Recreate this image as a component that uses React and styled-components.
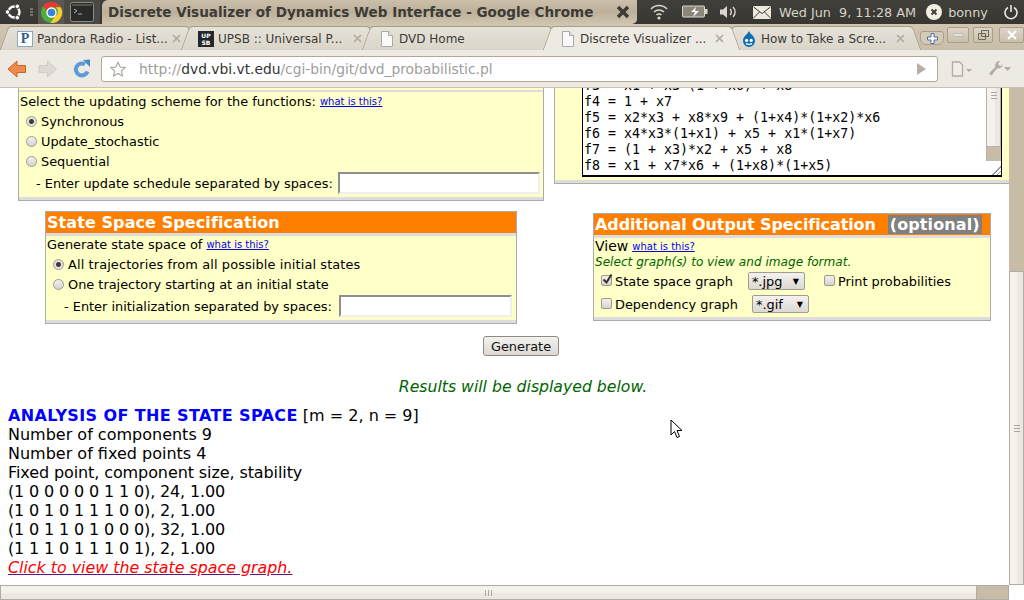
import React from "react"
import styled, { createGlobalStyle } from "styled-components"

const Global = createGlobalStyle`
  html, body { margin: 0; padding: 0; background: #fff; }
  body { width: 1024px; height: 600px; overflow: hidden; font-family: "DejaVu Sans", sans-serif; }
`

const Screen = styled.div`
  position: relative;
  width: 1024px;
  height: 600px;
  display: flex;
  flex-direction: column;
  overflow: hidden;
`

/* ---- ubuntu panel ---- */
const Panel = styled.div`
  height: 24px;
  flex: none;
  display: flex;
  align-items: center;
  background: linear-gradient(#403f3a, #373632);
  color: #dcd7cb;
`
const Launcher = styled.div`
  width: 102px;
  display: flex;
  align-items: center;
  height: 24px;
  padding-left: 4px;
  box-sizing: border-box;
`
const LauncherItem = styled.div`
  width: ${p => p.w}px;
  height: 24px;
  flex: none;
  display: flex;
  align-items: center;
  justify-content: center;
  background: ${p => p.bg || "transparent"};
`
const Handle = styled.div`
  width: 3px;
  height: 9px;
  background: repeating-linear-gradient(180deg, #77756e 0 2px, transparent 2px 3px);
`
const TitleTab = styled.div`
  width: 535px;
  height: 24px;
  box-sizing: border-box;
  padding: 0 7px 0 6px;
  display: flex;
  align-items: center;
  justify-content: space-between;
  background: linear-gradient(#cbbfa9, #bcb09a 50%, #cfc4ae);
  border-radius: 6px 0 5px 0;
  color: #3c3b37;
  font-weight: bold;
  font-size: 13.55px;
  white-space: nowrap;
`
const Tray = styled.div`
  flex: 1;
  display: flex;
  align-items: center;
  height: 24px;
  padding-left: 4px;
  font-size: 12.8px;
  white-space: nowrap;
`
const TrayText = styled.span`
  margin-left: ${p => p.ml}px;
  color: #d8d3c6;
`
const TrayIcon = styled.svg`
  margin-left: ${p => p.ml}px;
  flex: none;
`

/* ---- tab strip ---- */
const TabStrip = styled.div`
  height: 26px;
  flex: none;
  display: flex;
  align-items: flex-end;
  padding-left: 8px;
  background: linear-gradient(#cfc5b0, #c9bea9);
  position: relative;
`
const Tab = styled.div`
  position: relative;
  width: 181px;
  height: 24px;
  flex: none;
  box-sizing: border-box;
  padding: 0 5px 0 9px;
  display: flex;
  align-items: center;
  gap: 4px;
  font-size: 12px;
  color: #3c3b37;
  white-space: nowrap;
  background: ${p => (p.active ? "#ede9e3" : "linear-gradient(#e6e2d9, #dbd5c9)")};
  border-top: 1px solid #a89e8a;
  border-radius: 4px 4px 0 0;
  z-index: ${p => (p.active ? 2 : 1)};
  &::before, &::after {
    content: "";
    position: absolute;
    top: -1px;
    bottom: 0;
    width: 10px;
    background: inherit;
  }
  &::before {
    left: -4px;
    transform: skewX(-20deg);
    border-left: 1px solid #a89e8a;
    border-top: 1px solid #a89e8a;
    border-radius: 4px 0 0 0;
  }
  &::after {
    right: -4px;
    transform: skewX(20deg);
    border-right: 1px solid #a89e8a;
    border-top: 1px solid #a89e8a;
    border-radius: 0 4px 0 0;
  }
`
const TabLabel = styled.span`
  flex: 1;
  position: relative;
  z-index: 1;
`
const TabClose = styled.svg`
  position: relative;
  z-index: 1;
  margin-right: 3px;
  flex: none;
`
const Favicon = styled.span`
  position: relative;
  z-index: 1;
  width: 16px;
  height: 16px;
  flex: none;
  display: flex;
`
const PandoraIcon = styled.span`
  width: 16px;
  height: 16px;
  box-sizing: border-box;
  border: 1px solid #8da6c8;
  background: #fff;
  color: #2f5b96;
  font: bold 14px/14px "Liberation Serif", serif;
  text-align: center;
`
const UpsbIcon = styled.span`
  width: 16px;
  height: 16px;
  background: #25282b;
  color: #fff;
  font: bold 6px/7px "DejaVu Sans", sans-serif;
  text-align: center;
  padding-top: 1px;
  box-sizing: border-box;
`
const NewTab = styled.div`
  width: 24px;
  height: 14px;
  margin: 0 0 5px 7px;
  box-sizing: border-box;
  background: #d3cab7;
  border: 1px solid #a89e8a;
  border-radius: 3px 3px 6px 6px;
  display: flex;
  align-items: center;
  justify-content: center;
`
const WinButtons = styled.div`
  display: flex;
  margin: 0 0 7px 3px;
`
const WinButton = styled.div`
  width: ${p => p.w}px;
  height: 16px;
  margin-right: ${p => p.mr || 0}px;
  flex: none;
  box-sizing: border-box;
  border: 1px solid #a89e8a;
  background: linear-gradient(#ddd6c8, #c9bfab);
  border-radius: 2px;
  display: flex;
  align-items: center;
  justify-content: center;
`

/* ---- toolbar ---- */
const Toolbar = styled.div`
  height: 38px;
  flex: none;
  display: flex;
  align-items: center;
  background: #ede9e3;
  border-bottom: 1px solid #c9c3b7;
  box-sizing: border-box;
`
const NavSlot = styled.div`
  width: ${p => p.w}px;
  height: 26px;
  flex: none;
  display: flex;
  align-items: center;
  justify-content: center;
`
const Omnibox = styled.div`
  width: 837px;
  height: 26px;
  box-sizing: border-box;
  flex: none;
  display: flex;
  align-items: center;
  background: #fff;
  border: 1px solid #b3a88f;
  border-radius: 3px;
  padding: 0 11px 0 8px;
  font-size: 13.8px;
  color: #9d9d9d;
  white-space: nowrap;
`
const Url = styled.span`
  flex: 1;
  margin-left: 13px;
`
const Host = styled.span`
  color: #333;
`

/* ---- browser viewport ---- */
const Viewport = styled.div`
  flex: 1;
  min-height: 0;
  display: grid;
  grid-template-columns: 1fr 15px;
  grid-template-rows: 1fr 15px;
  background: #fff;
`
const Page = styled.div`
  overflow: hidden;
  min-width: 0;
  color: #000;
`
const TopRow = styled.div`
  display: flex;
  align-items: flex-start;
  height: 112px;
`
const LeftForm = styled.div`
  width: 526px;
  height: 113px;
  margin-left: 18px;
  box-sizing: border-box;
  background: linear-gradient(#ffffc8 2px, #ddd 2px 4px, #ffffc8 4px);
  border: solid #ababab;
  border-width: 0 1px 1px;
  box-shadow: inset 0 -3px 0 #ddd;
  padding: 3px 0 0 1px;
  font-size: 12.9px;
`
const RightForm = styled.div`
  width: 455px;
  height: 96px;
  margin-left: 10px;
  box-sizing: border-box;
  background: #ffffc8;
  border-left: 1px solid #ababab;
  border-bottom: 1px solid #ababab;
  box-shadow: inset 0 -3px 0 #ddd;
  padding-left: 27px;
`
const TextArea = styled.div`
  width: 420px;
  height: 89px;
  box-sizing: border-box;
  display: flex;
  background: #fff;
  border: solid #000;
  border-width: 0 1px 2px 1px;
  overflow: hidden;
`
const Code = styled.pre`
  flex: 1;
  margin: -10px 0 0 1px;
  font: 13.3px/16px "DejaVu Sans Mono", monospace;
  color: #000;
`
const AreaBar = styled.div`
  width: 15px;
  display: flex;
  flex-direction: column;
  flex: none;
`
const AreaThumb = styled.div`
  height: 59px;
  flex: none;
  box-sizing: border-box;
  background: linear-gradient(90deg, #f5f1eb 60%, #ece8e1 60%);
  border: 1px solid #b5b0a8;
  border-top: 0;
  display: flex;
  justify-content: center;
  padding-top: 4px;
`
const AreaTrack = styled.div`
  height: 14px;
  flex: none;
  background: #c9bca6;
  box-sizing: border-box;
  border-left: 1px solid #b5b0a8;
`
const AreaGrip = styled.div`
  flex: 1;
  background: repeating-linear-gradient(135deg, #fff 0 2px, #999 2px 3px);
  clip-path: polygon(100% 20%, 100% 100%, 20% 100%);
`
const Grip = styled.div`
  width: ${p => (p.h ? "7px" : "6px")};
  height: ${p => (p.h ? "6px" : "7px")};
  background: ${p => p.h
    ? "repeating-linear-gradient(90deg, #aaa7a0 0 1px, transparent 1px 3px)"
    : "repeating-linear-gradient(180deg, #aaa7a0 0 1px, transparent 1px 3px)"};
`
const MidRow = styled.div`
  display: flex;
  align-items: flex-start;
  margin-top: 11px;
`
const Spec = styled.div`
  width: ${p => p.w}px;
  height: ${p => p.h}px;
  margin-left: ${p => p.ml}px;
  margin-top: ${p => p.mt || 0}px;
  flex: none;
  box-sizing: border-box;
  background: #ffffc8;
  border: 1px solid #ababab;
  box-shadow: inset 0 -3px 0 #ddd;
  font-size: 12.9px;
`
const SpecHead = styled.div`
  height: 24px;
  margin-bottom: -2px;
  box-sizing: border-box;
  background: #ff8000;
  border-bottom: 3px solid #ddd;
  padding-left: 1px;
  color: #fff;
  font-weight: bold;
  font-size: 16px;
  line-height: 21px;
  letter-spacing: ${p => p.ls}px;
  white-space: nowrap;
`
const Optional = styled.span`
  background: #808080;
  margin-left: 12px;
  padding: 0 2px;
  letter-spacing: .1px;
`
const Line = styled.div`
  display: flex;
  align-items: center;
  height: 20px;
  margin-top: ${p => p.mt || 0}px;
  padding-left: ${p => p.pl || 0}px;
  letter-spacing: ${p => p.ls || 0}px;
  white-space: nowrap;
`
const Help = styled.a`
  color: #0000ee;
  text-decoration: underline;
  font-size: 10px;
  letter-spacing: 0;
  margin-left: 4px;
`
const ViewLabel = styled.span`
  font-size: 14px;
`
const Radio = styled.span`
  width: 11px;
  height: 11px;
  flex: none;
  margin-right: 4px;
  border-radius: 50%;
  box-sizing: border-box;
  border: 1px solid #9c9a95;
  background: ${p => p.on
    ? "radial-gradient(circle, #3c3b37 0 2px, #e6e3de 3px)"
    : "linear-gradient(#f3f1ee, #d6d3ce)"};
`
const Check = styled.span`
  width: 11px;
  height: 11px;
  flex: none;
  margin-left: ${p => p.ml || 0}px;
  margin-right: 3px;
  margin-top: -2px;
  border-radius: 2px;
  box-sizing: border-box;
  border: 1px solid #9c9a95;
  background: linear-gradient(#f3f1ee, #d6d3ce);
  display: flex;
  overflow: visible;
`
const CheckMark = styled.svg`
  flex: none;
  margin: -2px 0 0 0;
`
const Field = styled.span`
  width: ${p => p.w}px;
  height: 22px;
  flex: none;
  box-sizing: border-box;
  margin-left: ${p => p.ml}px;
  background: #fff;
  border: 2px solid;
  border-color: #8f8f8f #efefef #efefef #8f8f8f;
`
const Hint = styled.div`
  color: #006400;
  font-style: italic;
  font-size: 12.1px;
  line-height: 16px;
  margin: -2px 0 1px;
  padding-left: 1px;
  white-space: nowrap;
`
const Select = styled.span`
  width: 57px;
  height: 18px;
  flex: none;
  box-sizing: border-box;
  margin-left: ${p => p.ml}px;
  padding: 0 5px 0 3px;
  display: flex;
  align-items: center;
  justify-content: space-between;
  background: linear-gradient(#f4f2ef, #dcd9d4);
  border: 1px solid #a19c90;
  border-radius: 2px;
`
const Arrow = styled.span`
  font-size: 8px;
`
const ButtonRow = styled.div`
  display: flex;
  justify-content: center;
  margin: 12px 0 0 33px;
`
const Button = styled.button`
  width: 76px;
  height: 20px;
  padding: 0;
  font: 12.9px "DejaVu Sans", sans-serif;
  color: #111;
  background: linear-gradient(#f4f2ef, #dcd9d4);
  border: 1px solid #8f8b84;
  border-radius: 3px;
`
const Notice = styled.div`
  color: #006400;
  font-style: italic;
  font-size: 15.7px;
  line-height: 18px;
  text-align: center;
  margin: 22px 0 0 37px;
`
const Results = styled.div`
  margin: 10px 0 0 8px;
  font-size: 16px;
  line-height: 19px;
`
const ResultRow = styled.div`
  height: 19px;
  white-space: nowrap;
  letter-spacing: ${p => p.ls || 0}px;
`
const ResultsTitle = styled.b`
  color: #0000ff;
  letter-spacing: .38px;
`
const GraphLink = styled.a`
  color: #ff0000;
  font-style: italic;
  font-size: 15.85px;
  text-decoration: underline;
  text-decoration-color: #551a8b;
`

/* ---- scrollbars ---- */
const VBar = styled.div`
  display: flex;
  flex-direction: column;
  background: #c9bca6;
  padding-top: 183px;
  box-sizing: border-box;
`
const VThumb = styled.div`
  flex: 1;
  background: linear-gradient(90deg, #f5f1eb 55%, #ece8e1 55%);
  border: 1px solid #b0aca5;
  display: flex;
  align-items: center;
  justify-content: center;
`
const HBar = styled.div`
  display: flex;
  background: #c9bca6;
  border: 1px solid #b0aca5;
  border-left: 0;
  box-sizing: border-box;
`
const HThumb = styled.div`
  width: 977px;
  flex: none;
  background: linear-gradient(#f5f1eb 55%, #ece8e1 55%);
  border-right: 1px solid #b0aca5;
  border-left: 1px solid #b0aca5;
  box-sizing: border-box;
  display: flex;
  align-items: center;
  justify-content: center;
`
const Pointer = styled.svg`
  position: absolute;
  left: 670px;
  top: 419px;
`

const Ubuntu = () => (
  <svg width="20" height="20" viewBox="0 0 20 20">
    <circle cx="10" cy="10" r="5.5" fill="none" stroke="#fff" strokeWidth="2.4" />
    <circle cx="3.5" cy="10" r="2.3" fill="#fff" stroke="#3c3b37" />
    <circle cx="13.3" cy="4.3" r="2.3" fill="#fff" stroke="#3c3b37" />
    <circle cx="13.3" cy="15.7" r="2.3" fill="#fff" stroke="#3c3b37" />
  </svg>
)
const ChromeLogo = () => (
  <svg width="23" height="23" viewBox="0 0 24 24">
    <circle cx="12" cy="12" r="11" fill="#4caf3c" />
    <path d="M12 1a11 11 0 0 1 9.6 5.5H12a5.5 5.5 0 0 0-5.2 3.7L3 5.2A11 11 0 0 1 12 1z" fill="#e53a2f" />
    <path d="M21.6 6.5A11 11 0 0 1 11 23l4.8-7.2a5.5 5.5 0 0 0 .8-9.3z" fill="#f8cf2e" />
    <circle cx="12" cy="12" r="5.4" fill="#fff" />
    <circle cx="12" cy="12" r="4" fill="#3f7fd6" />
  </svg>
)
const Terminal = () => (
  <svg width="24" height="20" viewBox="0 0 24 20">
    <rect x=".5" y=".5" width="23" height="19" rx="2" fill="#2a2a28" stroke="#8d8b85" />
    <rect x="2" y="2" width="20" height="2" fill="#55534e" />
    <path d="M4 7l3 2-3 2M8 12h4" stroke="#b5b3ad" fill="none" />
  </svg>
)
const Doc = () => (
  <svg width="16" height="16" viewBox="0 0 16 16">
    <path d="M2.5.5h7l4 4v11h-11z" fill="#fafafa" stroke="#aaa" />
    <path d="M9.5.5v4h4" fill="#e6e6e6" stroke="#aaa" />
  </svg>
)
const Drupal = () => (
  <svg width="16" height="16" viewBox="0 0 16 16">
    <path d="M8 0c1 3 6 5 6 10a6 6 0 0 1-12 0c0-5 5-7 6-10z" fill="#0f6fb5" />
    <circle cx="5.6" cy="9.4" r="1.6" fill="#fff" />
    <circle cx="10.2" cy="9.4" r="1.6" fill="#fff" />
    <path d="M5 12.6c2 1 4 1 6 0" stroke="#fff" strokeWidth="1.2" fill="none" />
  </svg>
)
const Back = ({ off }) => (
  <svg width="20" height="18" viewBox="0 0 20 18">
    <path
      d="M10 1L1 9l9 8v-4.5h8.5v-7H10z"
      fill={off ? "#dedad2" : "#f08a4b"}
      stroke={off ? "#cfcbc2" : "#c9622a"}
      transform={off ? "matrix(-1 0 0 1 19.5 0)" : undefined}
    />
  </svg>
)
const Reload = () => (
  <svg width="20" height="20" viewBox="0 0 20 20">
    <path d="M15.5 12.5A6 6 0 1 1 13 5.3" fill="none" stroke="#5b9bd8" strokeWidth="4" />
    <path d="M11 1l7-.5V8z" fill="#4a8bcc" />
  </svg>
)
const Star = () => (
  <svg width="16" height="16" viewBox="0 0 18 17">
    <path d="M9 1l2.4 5.3 5.6.6-4.2 3.8 1.2 5.6L9 13.5l-5 2.8 1.2-5.6L1 6.9l5.6-.6z" fill="none" stroke="#aaa69e" strokeWidth="1.3" />
  </svg>
)
const Wrench = () => (
  <svg width="16" height="17" viewBox="0 0 16 17">
    <path d="M15 4a4.5 4.5 0 0 1-5.8 4.3L3.600 15.600 1 13.400l6.400-6.600A4.500 4.500 0 0 1 12.500 1L10 3.500l1 2 2 .5z" fill="#b5ad9d" />
  </svg>
)
const CloseX = () => (
  <TabClose width="9" height="9" viewBox="0 0 9 9">
    <path d="M1 1l7 7M8 1L1 8" stroke="#b0aa9f" strokeWidth="1.7" />
  </TabClose>
)

const TABS = [
  { label: "Pandora Radio - List...", icon: <PandoraIcon>P</PandoraIcon>, close: true },
  { label: "UPSB :: Universal P...", icon: <UpsbIcon>UP<br />SB</UpsbIcon>, close: true },
  { label: "DVD Home", icon: <Doc /> },
  { label: "Discrete Visualizer ...", icon: <Doc />, close: true, active: true },
  { label: "How to Take a Scre...", icon: <Drupal />, close: true },
]

const CODE = `f3 = x1 + x3*(1 + x6) + x8
f4 = 1 + x7
f5 = x2*x3 + x8*x9 + (1+x4)*(1+x2)*x6
f6 = x4*x3*(1+x1) + x5 + x1*(1+x7)
f7 = (1 + x3)*x2 + x5 + x8
f8 = x1 + x7*x6 + (1+x8)*(1+x5)
f9`

const RESULT_ROWS = [
  { text: "Number of components 9" },
  { text: "Number of fixed points 4" },
  { text: "Fixed point, component size, stability", ls: -.1 },
  { text: "(1 0 0 0 0 0 1 1 0), 24, 1.00", ls: -.14 },
  { text: "(1 0 1 0 1 1 1 0 0), 2, 1.00", ls: -.14 },
  { text: "(1 0 1 1 0 1 0 0 0), 32, 1.00", ls: -.14 },
  { text: "(1 1 1 0 1 1 1 0 1), 2, 1.00", ls: -.14 },
]

export default function App() {
  return (
    <Screen>
      <Global />
      <Panel>
        <Launcher>
          <LauncherItem w={20}><Ubuntu /></LauncherItem>
          <LauncherItem w={14}><Handle /></LauncherItem>
          <LauncherItem w={26} bg="#5a5852"><ChromeLogo /></LauncherItem>
          <LauncherItem w={36} bg="#4a4944"><Terminal /></LauncherItem>
        </Launcher>
        <TitleTab>
          Discrete Visualizer of Dynamics Web Interface - Google Chrome
          <svg width="14" height="14" viewBox="0 0 14 14">
            <path d="M2 2l10 10M12 2L2 12" stroke="#3c3b37" strokeWidth="3.4" />
          </svg>
        </TitleTab>
        <Tray>
          <TrayIcon ml={9} width="18" height="16" viewBox="0 0 18 16">
            <path d="M1 5a11 11 0 0 1 16 0M4 8a7 7 0 0 1 10 0M6.500 11a3.500 3.500 0 0 1 5 0" fill="none" stroke="#dcd7cb" strokeWidth="1.5" />
            <circle cx="9" cy="14" r="1.600" fill="#dcd7cb" />
          </TrayIcon>
          <TrayIcon ml={14} width="26" height="14" viewBox="0 0 26 14">
            <rect x=".5" y="1" width="22" height="11" rx="1" fill="#8a8778" stroke="#dcd7cb" />
            <rect x="23" y="4" width="2.500" height="5" fill="#dcd7cb" />
            <path d="M14 2l-5 5h4l-2 5 6-6h-4z" fill="#fff" />
          </TrayIcon>
          <TrayIcon ml={11} width="18" height="14" viewBox="0 0 18 14">
            <path d="M1 4.500h3l4-3.500v12l-4-3.500H1z" fill="#dcd7cb" />
            <path d="M11 4a4 4 0 0 1 0 6M14 2a7 7 0 0 1 0 10" fill="none" stroke="#dcd7cb" strokeWidth="1.400" />
          </TrayIcon>
          <TrayIcon ml={16} width="18" height="13" viewBox="0 0 18 13">
            <rect width="18" height="13" rx="1" fill="#eee9dd" />
            <path d="M.5 1L9 7.500 17.500 1M.5 12l6-6M17.500 12l-6-6" fill="none" stroke="#3c3b37" />
          </TrayIcon>
          <TrayText ml={8}>Wed Jun&nbsp; 9, 11:28 AM</TrayText>
          <TrayIcon ml={10} width="16" height="16" viewBox="0 0 16 16">
            <circle cx="8" cy="8" r="8" fill="#f3eee2" />
            <path d="M5.500 5.500l5 5M10.500 5.500l-5 5" stroke="#3c3b37" strokeWidth="1.800" />
          </TrayIcon>
          <TrayText ml={6}>bonny</TrayText>
          <TrayIcon ml={15} width="16" height="16" viewBox="0 0 16 16">
            <path d="M5 3.500a6 6 0 1 0 6 0M8 1v7" fill="none" stroke="#eee9dd" strokeWidth="1.600" />
          </TrayIcon>
        </Tray>
      </Panel>

      <TabStrip>
        {TABS.map(t => (
          <Tab key={t.label} active={t.active}>
            <Favicon>{t.icon}</Favicon>
            <TabLabel>{t.label}</TabLabel>
            {t.close && <CloseX />}
          </Tab>
        ))}
        <NewTab>
          <svg width="11" height="11" viewBox="0 0 11 11">
            <path d="M4 .5h3v3.500h3.500v3H7v3.500H4V7H.5V4H4z" fill="#fff" stroke="#4a6ea8" />
          </svg>
        </NewTab>
        <WinButtons>
          <WinButton w={22} mr={4}>
            <svg width="10" height="8" viewBox="0 0 10 8"><rect y="3" width="10" height="2" fill="#fff" stroke="#8f8778" strokeWidth=".5" /></svg>
          </WinButton>
          <WinButton w={20} mr={6}>
            <svg width="11" height="10" viewBox="0 0 11 10"><path d="M3.500.5h7v6h-7zM.5 3.500h7v6h-7z" fill="none" stroke="#6d675b" /></svg>
          </WinButton>
          <WinButton w={25}>
            <svg width="10" height="10" viewBox="0 0 10 10"><path d="M1 1l8 8M9 1L1 9" stroke="#fff" strokeWidth="2" /></svg>
          </WinButton>
        </WinButtons>
      </TabStrip>

      <Toolbar>
        <NavSlot w={33}><Back /></NavSlot>
        <NavSlot w={30}><Back off={1} /></NavSlot>
        <NavSlot w={38}><Reload /></NavSlot>
        <Omnibox>
          <Star />
          <Url>http://<Host>dvd.vbi.vt.edu</Host>/cgi-bin/git/dvd_probabilistic.pl</Url>
          <svg width="9" height="12" viewBox="0 0 9 12"><path d="M0 0l9 6-9 6z" fill="#b5b0a5" /></svg>
        </Omnibox>
        <NavSlot w={48}>
          <svg width="22" height="16" viewBox="0 0 22 16">
            <path d="M1.500 1h7l3 3v11h-10z" fill="#f2eee7" stroke="#b5ad9d" strokeWidth="1.300" />
            <path d="M15 8h6l-3 3z" fill="#b5ad9d" />
          </svg>
        </NavSlot>
        <NavSlot w={26}>
          <Wrench />
          <svg width="7" height="4" viewBox="0 0 7 4"><path d="M0 0h7L3.500 4z" fill="#b5ad9d" /></svg>
        </NavSlot>
      </Toolbar>

      <Viewport>
        <Page>
          <TopRow>
            <LeftForm>
              <Line>Select the updating scheme for the functions:<Help>what is this?</Help></Line>
              <Line pl={6}><Radio on={1} />Synchronous</Line>
              <Line pl={6}><Radio />Update_stochastic</Line>
              <Line pl={6}><Radio />Sequential</Line>
              <Line pl={16} mt={2}>- Enter update schedule separated by spaces:<Field w={202} ml={5} /></Line>
            </LeftForm>
            <RightForm>
              <TextArea>
                <Code>{CODE}</Code>
                <AreaBar>
                  <AreaThumb><Grip /></AreaThumb>
                  <AreaTrack />
                  <AreaGrip />
                </AreaBar>
              </TextArea>
            </RightForm>
          </TopRow>

          <MidRow>
            <Spec w={472} h={113} ml={45}>
              <SpecHead ls={.08}>State Space Specification</SpecHead>
              <Line pl={1}>Generate state space of<Help>what is this?</Help></Line>
              <Line pl={7} ls={.12}><Radio on={1} />All trajectories from all possible initial states</Line>
              <Line pl={7}><Radio />One trajectory starting at an initial state</Line>
              <Line pl={18} mt={2}>- Enter initialization separated by spaces:<Field w={173} ml={7} /></Line>
            </Spec>
            <Spec w={398} h={108} ml={76} mt={2}>
              <SpecHead ls={-.1}>Additional Output Specification<Optional>(optional)</Optional></SpecHead>
              <Line pl={1}><ViewLabel>View</ViewLabel><Help>what is this?</Help></Line>
              <Hint>Select graph(s) to view and image format.</Hint>
              <Line pl={7}>
                <Check>
                  <CheckMark width="11" height="11" viewBox="0 0 11 11">
                    <path d="M1.500 5.500l3 3 5-8" fill="none" stroke="#33322e" strokeWidth="2" />
                  </CheckMark>
                </Check>
                State space graph
                <Select ml={15}>*.jpg <Arrow>▼</Arrow></Select>
                <Check ml={19} />Print probabilities
              </Line>
              <Line pl={7} mt={3}>
                <Check />Dependency graph
                <Select ml={14}>*.gif <Arrow>▼</Arrow></Select>
              </Line>
            </Spec>
          </MidRow>

          <ButtonRow><Button>Generate</Button></ButtonRow>
          <Notice>Results will be displayed below.</Notice>

          <Results>
            <ResultRow>
              <ResultsTitle>ANALYSIS OF THE STATE SPACE</ResultsTitle> [m = 2, n = 9]
            </ResultRow>
            {RESULT_ROWS.map(r => (
              <ResultRow key={r.text} ls={r.ls}>{r.text}</ResultRow>
            ))}
            <ResultRow>
              <GraphLink>Click to view the state space graph.</GraphLink>
            </ResultRow>
          </Results>
        </Page>
        <VBar>
          <VThumb><Grip /></VThumb>
        </VBar>
        <HBar>
          <HThumb><Grip h={1} /></HThumb>
        </HBar>
        <div />
      </Viewport>

      <Pointer width="14" height="21" viewBox="0 0 14 21">
        <path d="M1 1v15l3.500-3.500 2.500 6 2.500-1-2.500-6H12z" fill="#fff" stroke="#000" strokeWidth="1" />
      </Pointer>
    </Screen>
  )
}
